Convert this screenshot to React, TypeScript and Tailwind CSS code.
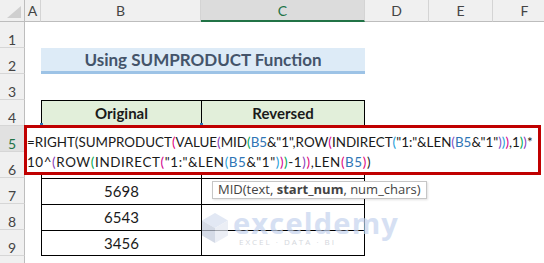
import React from 'react';

type Tok = [string, string];

const K = '#1a1a1a';
const P1 = '#e0007a';
const P2 = '#8a3ab9';
const P3 = '#00a651';
const P4 = '#d1008e';
const P5 = '#1c9bd7';
const P6 = '#7a4fc9';
const REF = '#2f75b5';

const line1: Tok[] = [
  ['=RIGHT', K], ['(', K], ['SUMPRODUCT', K], ['(', P1], ['VALUE', K], ['(', P2], ['MID', K], ['(', P3],
  ['B5', REF], ['&"1",ROW', K], ['(', P4], ['INDIRECT', K], ['(', P5], ['"1:"&LEN', K], ['(', P6],
  ['B5', REF], ['&"1"', K], [')', P6], [')', P5], [')', P4], [',1', K], [')', P3], [')', P2], ['*', K],
];

const line2: Tok[] = [
  ['10^', K], ['(', P2], ['ROW', K], ['(', P3], ['INDIRECT', K], ['(', P4], ['"1:"&LEN', K], ['(', P5],
  ['B5', REF], ['&"1"', K], [')', P5], [')', P4], [')', P3], ['-1', K], [')', P2], [')', P1],
  [',LEN', K], ['(', P1], ['B5', REF], [')', P1], [')', K],
];

const FormulaLine = ({ toks, className }: { toks: Tok[]; className?: string }) => (
  <div className={`h-[20px] leading-[20px] whitespace-nowrap ${className ?? ''}`}>
    {toks.map(([t, c], i) => (
      <span key={i} style={{ color: c }}>{t}</span>
    ))}
  </div>
);

const colHeaders = [
  { label: 'A', w: 'w-[16px]' },
  { label: 'B', w: 'w-[160px]' },
  { label: 'C', w: 'w-[164px]', active: true },
  { label: 'D', w: 'w-[64px]' },
  { label: 'E', w: 'w-[64px]' },
  { label: 'F', w: 'w-[64px]' },
];

const RowHead = ({ n, active }: { n?: number; active?: boolean }) => (
  <div
    className={`w-[25px] shrink-0 h-full flex items-end justify-center border-r border-b border-r-[#bdbdbd] border-b-[#d6d6d6] text-[14px] leading-[15px] ${
      active ? 'bg-[#e1e1e1] text-[#217346]' : 'bg-[#f0f0f0] text-[#444444]'
    }`}
  >
    {n}
  </div>
);

const Blank = ({ w }: { w: string }) => <div className={`${w} shrink-0 h-full`} />;

const Row = ({ n, active, children }: { n?: number; active?: boolean; children?: React.ReactNode }) => (
  <div className="flex h-[26px] shrink-0">
    <RowHead n={n} active={active} />
    {children}
  </div>
);

const TableRow = ({ n, b, active, last }: { n: number; b?: string; active?: boolean; last?: boolean }) => (
  <Row n={n} active={active}>
    <Blank w="w-[16px]" />
    <div className={`w-[160px] shrink-0 h-full border-l border-t border-black flex items-center justify-center ${last ? 'border-b' : ''}`}>
      {b}
    </div>
    <div className={`w-[164px] shrink-0 h-full border-l border-r border-t border-black ${last ? 'border-b' : ''}`} />
  </Row>
);

export default function App() {
  return (
    <div className="relative w-[544px] h-[263px] overflow-hidden bg-white font-['Lato','Open_Sans',sans-serif] text-[15px] text-[#1a1a1a]">
      {/* column headers */}
      <div className="flex h-[22px]">
        <div className="w-[25px] shrink-0 h-full bg-[#f0f0f0] border-r border-b border-[#bdbdbd] relative">
          <svg className="absolute right-[3px] bottom-[3px]" width="14" height="12" viewBox="0 0 14 12">
            <polygon points="14,0 14,12 0,12" fill="#cfcfcf" />
          </svg>
        </div>
        {colHeaders.map((c) => (
          <div
            key={c.label}
            className={`${c.w} shrink-0 h-full flex items-center justify-center text-[14px] border-r border-[#d4d4d4] ${
              c.active
                ? 'bg-[#dcdcdc] text-[#217346] border-b-2 border-b-[#217346]'
                : 'bg-[#f0f0f0] text-[#444444] border-b border-b-[#bdbdbd]'
            }`}
          >
            {c.label}
          </div>
        ))}
      </div>

      <Row n={1} />
      <Row n={2}>
        <Blank w="w-[16px]" />
        <div className="w-[324px] shrink-0 h-full bg-[#ddebf7] border-b-[3px] border-[#9dc3e6] flex items-center justify-center font-bold text-[17px] text-[#44546a]">
          Using SUMPRODUCT Function
        </div>
      </Row>
      <Row n={3} />
      <Row n={4}>
        <Blank w="w-[16px]" />
        <div className="w-[160px] shrink-0 h-full bg-[#e2efda] border-l border-t border-black flex items-center justify-center font-bold">
          Original
        </div>
        <div className="w-[164px] shrink-0 h-full bg-[#e2efda] border-l border-r border-t border-black flex items-center justify-center font-bold">
          Reversed
        </div>
      </Row>
      <TableRow n={5} active />
      <TableRow n={6} />
      <TableRow n={7} b="5698" />
      <TableRow n={8} b="6543" />
      <TableRow n={9} b="3456" last />
      <Row />

      {/* watermark */}
      <div className="absolute left-[201px] top-[210px] flex items-center gap-[4px] opacity-70 pointer-events-none">
        <svg width="28" height="32" viewBox="0 0 28 32">
          <polygon points="14,1 27,8.5 14,16 1,8.5" fill="#d6dff0" />
          <polygon points="1,8.5 14,16 14,31 1,23.5" fill="#c3cbdc" />
          <polygon points="27,8.5 14,16 14,31 27,23.5" fill="#e3e8f2" />
        </svg>
        <div className="flex flex-col">
          <span className="block font-['Open_Sans',sans-serif] font-bold text-[29px] leading-[25px] h-[25px] text-[#c5d3ee] tracking-[1.2px]">exceldemy</span>
          <span className="block font-['Open_Sans',sans-serif] text-[8px] leading-[9px] h-[9px] mt-[2px] text-[#c3c7cf] tracking-[2px] pl-[6px]">EXCEL · DATA · BI</span>
        </div>
      </div>

      {/* reference handles */}
      <div className="absolute left-[40px] top-[123px] w-[3px] h-[3px] bg-[#2f75b5]" />
      <div className="absolute left-[200px] top-[123px] w-[3px] h-[3px] bg-[#2f75b5]" />

      {/* in-cell formula editor */}
      <div className="absolute left-[24px] top-[125px] w-[517px] h-[50px] border-[3px] border-[#c00000] bg-white pt-[4px] text-[13.4px]">
        <FormulaLine toks={line1} />
        <FormulaLine toks={line2} className="tracking-[0.6px]" />
      </div>

      {/* function tooltip */}
      <div className="absolute left-[212px] top-[181px] h-[18px] px-[5px] bg-white border border-[#c6c6c6] shadow-[1px_1px_2px_rgba(0,0,0,0.12)] flex items-center font-['Open_Sans',sans-serif] text-[13px] text-[#444444] whitespace-nowrap">
        MID(text,&nbsp;<span className="font-bold">start_num</span>, num_chars)
      </div>
    </div>
  );
}
